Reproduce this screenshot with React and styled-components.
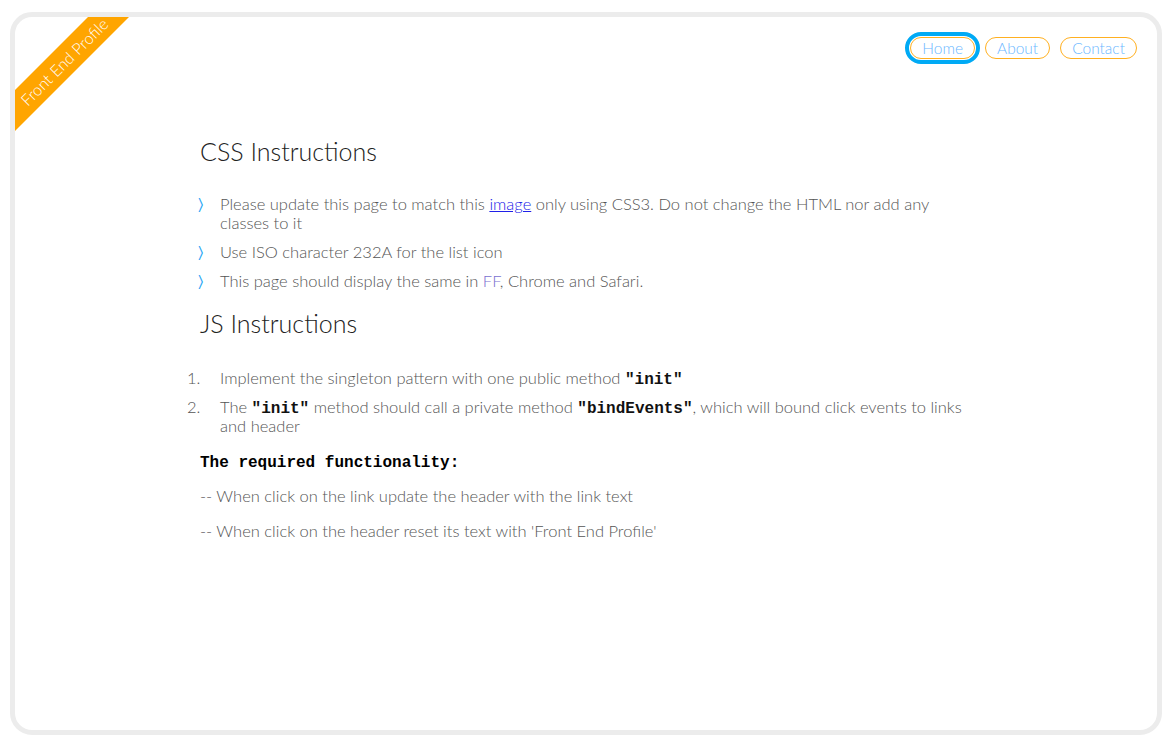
import React from 'react'
import styled, { createGlobalStyle } from 'styled-components'

const GlobalStyle = createGlobalStyle`
  html, body {
    margin: 0;
    padding: 0;
    background: #fff;
  }
  body {
    font-family: Lato, 'Open Sans', sans-serif;
    font-weight: 300;
  }
`

const Frame = styled.div`
  position: relative;
  box-sizing: border-box;
  margin: 12px 10px 10px 10px;
  height: 723px;
  border: 5px solid #ececec;
  border-radius: 22px;
  overflow: hidden;
  background: #fff;
`

const Ribbon = styled.div`
  position: absolute;
  top: 30px;
  left: -39px;
  width: 176px;
  height: 29px;
  background: #ffa500;
  color: #fff;
  font-size: 16px;
  line-height: 29px;
  text-align: center;
  transform: rotate(-45deg);
`

const Nav = styled.nav`
  display: flex;
  justify-content: flex-end;
  gap: 10px;
  padding: 20px 20px 0 0;
`

const NavLink = styled.a`
  display: inline-block;
  padding: 0 11px;
  height: 22px;
  line-height: 21px;
  box-sizing: border-box;
  border: 1px solid #ffb021;
  border-radius: 12px;
  color: #6bb8ff;
  font-size: 15.5px;
  text-decoration: none;
  outline: ${(p) => (p.$focused ? '4px solid #00aaf5' : 'none')};
  outline-offset: 1px;
`

const Content = styled.main`
  width: 772px;
  margin: 77px auto 0;
  color: #555;
  font-size: 16.5px;
  line-height: 19px;
`

const Heading = styled.h2`
  margin: ${(p) => p.$top || 0}px 0 0 0;
  font-size: 25px;
  font-weight: 300;
  color: #222;
  line-height: 30px;
`

const BulletList = styled.ul`
  list-style: none;
  margin: 29px 0 0 0;
  padding: 0 0 0 20px;
`

const Bullet = styled.li`
  position: relative;
  margin-bottom: 10px;
  &::before {
    content: '\\232A';
    position: absolute;
    left: -22px;
    top: -1px;
    color: #2aa6f5;
    font-family: 'DejaVu Sans', sans-serif;
    font-size: 16px;
  }
`

const NumberList = styled.ol`
  list-style: none;
  counter-reset: step;
  margin: 31px 0 0 0;
  padding: 0 0 0 20px;
`

const Numbered = styled.li`
  position: relative;
  counter-increment: step;
  margin-bottom: 10px;
  &::before {
    content: counter(step) '.';
    position: absolute;
    left: -33px;
    top: 0;
    color: #555;
  }
`

const Mark = styled.span`
  color: #7a6fd0;
`

const Link = styled.a`
  color: #2020e8;
  text-decoration: underline;
`

const Code = styled.code`
  font-family: 'Liberation Mono', monospace;
  font-weight: 700;
  color: #111;
  font-size: 16px;
  line-height: 1;
`

const SubTitle = styled.p`
  margin: 18px 0 0 0;
  font-family: 'Liberation Mono', monospace;
  font-weight: 700;
  color: #000;
  font-size: 16px;
`

const Para = styled.p`
  margin: ${(p) => p.$top || 16}px 0 0 0;
`

export default function App() {
  return (
    <>
      <GlobalStyle />
      <Frame>
        <Ribbon>Front End Profile</Ribbon>
        <Nav>
          <NavLink href="#" $focused>Home</NavLink>
          <NavLink href="#">About</NavLink>
          <NavLink href="#">Contact</NavLink>
        </Nav>
        <Content>
          <Heading>CSS Instructions</Heading>
          <BulletList>
            <Bullet>
              Please update this page to match this <Link href="#">image</Link> only using CSS3. Do not
              change the HTML nor add any classes to it
            </Bullet>
            <Bullet>Use ISO character 232A for the list icon</Bullet>
            <Bullet>
              This page should display the same in <Mark>FF</Mark>, Chrome and Safari.
            </Bullet>
          </BulletList>
          <Heading $top={17}>JS Instructions</Heading>
          <NumberList>
            <Numbered>
              Implement the singleton pattern with one public method <Code>"init"</Code>
            </Numbered>
            <Numbered>
              The <Code>"init"</Code> method should call a private method <Code>"bindEvents"</Code>,
              which will bound click events to links and header
            </Numbered>
          </NumberList>
          <SubTitle>The required functionality:</SubTitle>
          <Para $top={14}>-- When click on the link update the header with the link text</Para>
          <Para>-- When click on the header reset its text with 'Front End Profile'</Para>
        </Content>
      </Frame>
    </>
  )
}
